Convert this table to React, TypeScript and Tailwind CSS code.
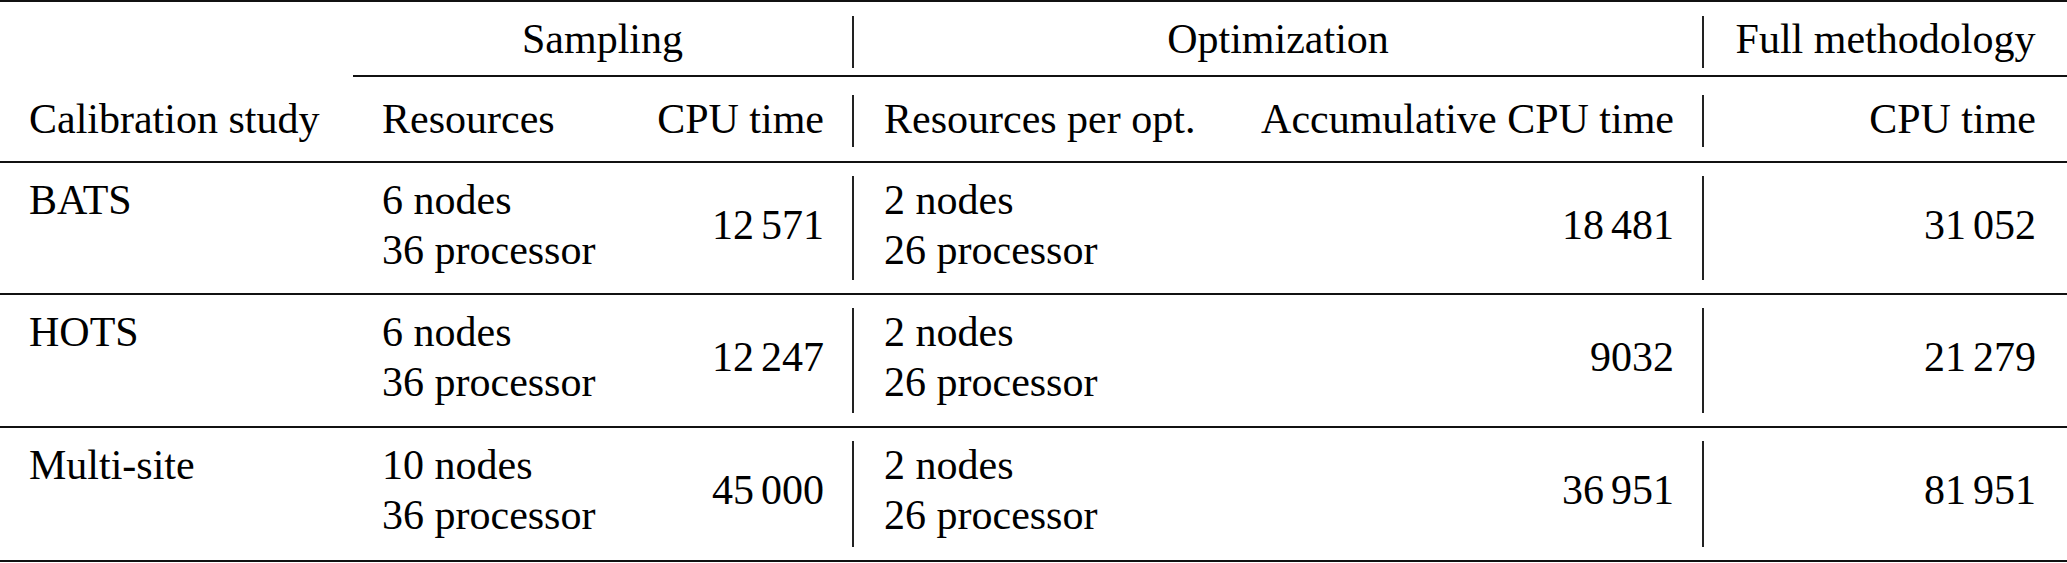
import { FC, ReactNode } from "react";

const cols =
  "grid grid-cols-[353px_275px_224px_2px_374px_474px_2px_363px]";

type Row = {
  study: string;
  sampling: [string, string];
  samplingCpu: string;
  opt: [string, string];
  optCpu: string;
  total: string;
};

const rows: Row[] = [
  {
    study: "BATS",
    sampling: ["6 nodes", "36 processor"],
    samplingCpu: "12 571",
    opt: ["2 nodes", "26 processor"],
    optCpu: "18 481",
    total: "31 052",
  },
  {
    study: "HOTS",
    sampling: ["6 nodes", "36 processor"],
    samplingCpu: "12 247",
    opt: ["2 nodes", "26 processor"],
    optCpu: "9032",
    total: "21 279",
  },
  {
    study: "Multi-site",
    sampling: ["10 nodes", "36 processor"],
    samplingCpu: "45 000",
    opt: ["2 nodes", "26 processor"],
    optCpu: "36 951",
    total: "81 951",
  },
];

const Rule: FC = () => <div className="h-[2px] w-full bg-[#111]" />;

const Bar: FC<{ className: string }> = ({ className }) => (
  <div className={`w-[2px] bg-[#222] ${className}`} />
);

const Lines: FC<{ lines: [string, string]; className?: string }> = ({
  lines,
  className = "",
}) => (
  <div className={`flex flex-col pt-[12px] leading-[50px] ${className}`}>
    <span>{lines[0]}</span>
    <span>{lines[1]}</span>
  </div>
);

// numbers use a narrow gap like siunitx's thin space
const Num: FC<{ children: ReactNode; className: string }> = ({
  children,
  className,
}) => {
  const text = String(children);
  const parts = text.split(" ");
  return (
    <div
      className={`mt-[12px] flex h-[100px] items-center justify-end ${className}`}
    >
      {parts.length === 2 ? (
        <span>
          {parts[0]}
          <span className="inline-block w-[7px]" />
          {parts[1]}
        </span>
      ) : (
        <span>{text}</span>
      )}
    </div>
  );
};

const App: FC = () => {
  return (
    <div className="h-[563px] w-[2067px] overflow-hidden bg-white font-['Liberation_Serif','Times_New_Roman',serif] text-[42px] text-black">
      <Rule />

      {/* group headings */}
      <div className={`${cols} h-[73px]`}>
        <div />
        <div className="col-span-2 flex items-center justify-center pt-[2px]">
          Sampling
        </div>
        <Bar className="mt-[14px] mb-[7px]" />
        <div className="col-span-2 flex items-center justify-center pt-[2px]">
          Optimization
        </div>
        <Bar className="mt-[14px] mb-[7px]" />
        <div className="flex items-center justify-center pt-[2px]">
          Full methodology
        </div>
      </div>

      <div className="ml-[353px] h-[2px] bg-[#111]" />

      {/* column headings */}
      <div className={`${cols} h-[84px] items-stretch`}>
        <div className="flex items-center pl-[29px]">Calibration study</div>
        <div className="flex items-center pl-[29px]">Resources</div>
        <div className="flex items-center justify-end pr-[28px]">CPU time</div>
        <Bar className="mt-[18px] mb-[14px]" />
        <div className="flex items-center pl-[30px]">Resources per opt.</div>
        <div className="flex items-center justify-end pr-[28px]">
          Accumulative CPU time
        </div>
        <Bar className="mt-[18px] mb-[14px]" />
        <div className="flex items-center justify-end pr-[31px]">CPU time</div>
      </div>

      <Rule />

      {rows.map((r, i) => (
        <div key={r.study}>
          <div
            className={`${cols} ${
              i === 0 ? "h-[130px]" : i === 1 ? "h-[131px]" : "h-[132px]"
            }`}
          >
            <div className="pl-[29px] pt-[12px] leading-[50px]">{r.study}</div>
            <Lines lines={r.sampling} className="pl-[29px]" />
            <Num className="pr-[28px]">{r.samplingCpu}</Num>
            <Bar className="my-[13px]" />
            <Lines lines={r.opt} className="pl-[30px]" />
            <Num className="pr-[28px]">{r.optCpu}</Num>
            <Bar className="my-[13px]" />
            <Num className="pr-[31px]">{r.total}</Num>
          </div>
          <Rule />
        </div>
      ))}
    </div>
  );
};

export default App;
